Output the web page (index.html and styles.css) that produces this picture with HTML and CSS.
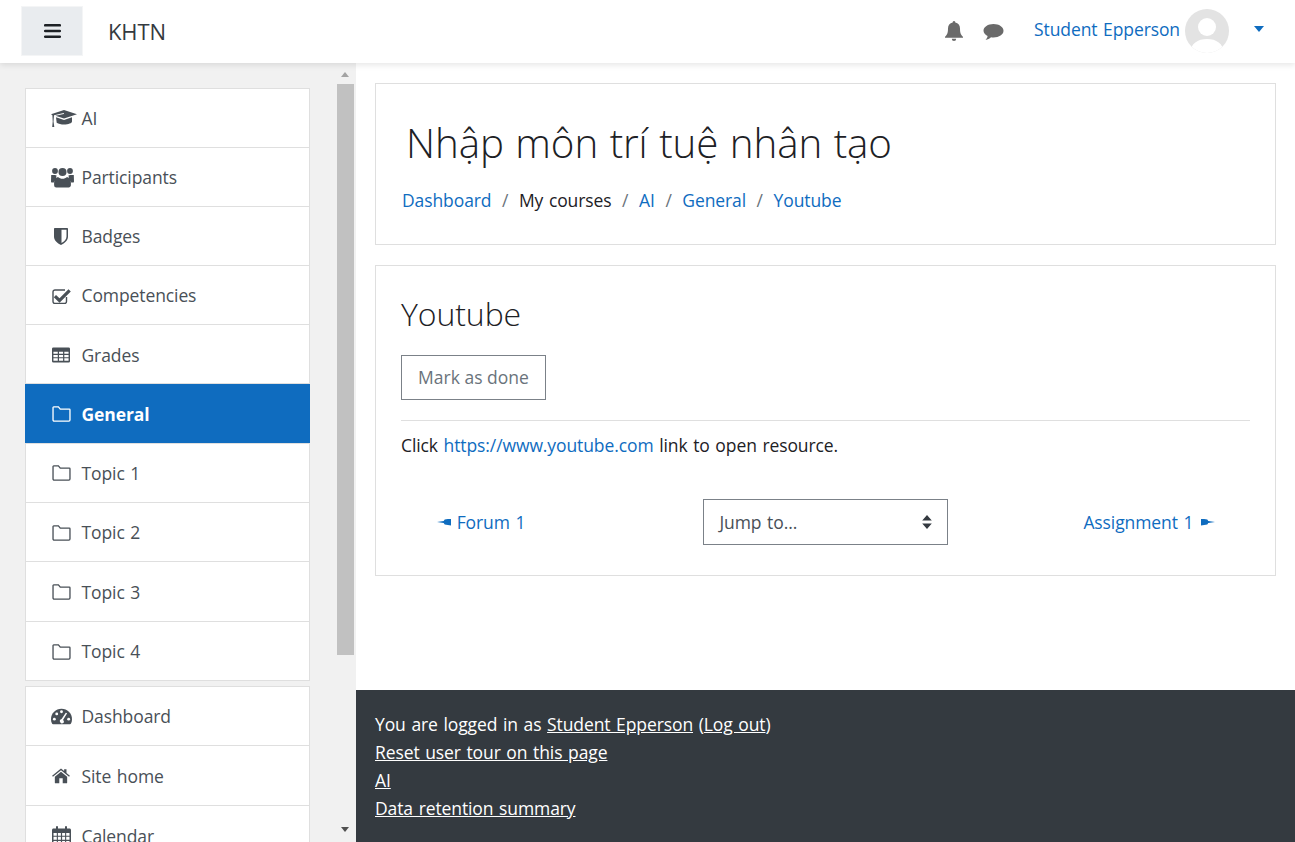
FILE: index.html
```html
<!DOCTYPE html>
<html lang="en">
<head>
<meta charset="utf-8">
<title>Youtube</title>
<link rel="stylesheet" href="styles.css">
</head>
<body>
<svg class="defs" width="0" height="0" aria-hidden="true">
  <symbol id="i-folder" viewBox="0 0 20 17"><path d="M1.700 1h5l2 2.400h9.600c.4 0 .7.300.7.700v10.700c0 .7-.5 1.200-1.200 1.200H2.200c-.7 0-1.200-.5-1.200-1.200V1.700c0-.4.300-.7.700-.7z" fill="none" stroke="currentColor" stroke-width="1.400"/></symbol>
</svg>
<header class="topbar">
  <button class="menu-btn" type="button" aria-label="Menu">
    <svg width="17" height="14" viewBox="0 0 17 14"><path d="M1.200 0h14.600a1.200 1.200 0 0 1 0 2.600H1.200a1.200 1.200 0 0 1 0-2.600zm0 5.700h14.600a1.200 1.200 0 0 1 0 2.600H1.200a1.200 1.200 0 0 1 0-2.600zm0 5.700h14.600a1.200 1.200 0 0 1 0 2.600H1.200a1.200 1.200 0 0 1 0-2.600z" fill="#1d2125"/></svg>
  </button>
  <span class="brand">KHTN</span>
  <div class="top-right">
    <svg class="bell" width="20" height="22" viewBox="0 0 20 22"><path d="M10 1a1.300 1.300 0 0 1 1.300 1.500C14.300 3 16 5.500 16 8.500c0 5 1.300 6.700 3 8.300v1H1v-1c1.700-1.600 3-3.300 3-8.300 0-3 1.700-5.500 4.700-6A1.300 1.300 0 0 1 10 1zM7.800 18.800h4.400a2.200 2.200 0 0 1-4.400 0z" fill="#6a6a6a"/></svg>
    <svg class="chat" width="21" height="18" viewBox="0 0 21 18"><path d="M10.500 1c5.500 0 10 2.900 10 6.700s-4.500 6.700-10 6.700c-.9 0-1.700-.1-2.500-.2C6.600 15.500 4.800 16.500 2.500 17c.9-1 1.900-2.200 2.100-4C2.300 11.800.5 9.900.5 7.700.5 3.900 5 1 10.500 1z" fill="#6a6a6a"/></svg>
    <a class="user-name" href="#">Student Epperson</a>
    <svg class="avatar" width="44" height="44" viewBox="0 0 44 44"><defs><clipPath id="av"><circle cx="22" cy="22" r="22"/></clipPath></defs><circle cx="22" cy="22" r="22" fill="#e3e3e3"/><g clip-path="url(#av)" fill="#fff"><circle cx="22" cy="18" r="9"/><path d="M5 46c0-11 7-16 17-16s17 5 17 16z"/></g></svg>
    <span class="caret"></span>
  </div>
</header>
<div class="layout">
  <aside class="sidebar">
    <nav class="nav-list">
      <a class="nav-item" href="#"><span class="ico"><svg width="26" height="19" viewBox="0 0 26 19"><path d="M13 1 26 5.300l-13 4.300L4.500 6.800 12.800 5l.2-.6-.3-.3-9.700 2.100L2.500 12.500l.8 5.500H1.200l.5-5.500-.3-6.200L0 5.300zM5 8.200l8 2.700 8-2.700v4.300c0 1.600-3.600 3-8 3-2.800 0-5.500-.7-7.300-1.800z" fill="#495057"/></svg></span>AI</a>
      <a class="nav-item" href="#"><span class="ico"><svg width="23" height="21" viewBox="0 0 23 21"><g fill="#495057"><circle cx="4" cy="4" r="2.900"/><circle cx="19" cy="4" r="2.900"/><circle cx="11.500" cy="5" r="4"/><path d="M.2 8h3.600c.7 0 1.300.2 1.800.5-.6 1.300-.4 3.200.2 4.300-1.300.3-2.500 1.300-3 2.700H.9C.3 15.500 0 15 0 14.500zM19.200 8h3.600L23 14.500c0 .5-.3 1-.9 1h-1.900c-.5-1.400-1.700-2.400-3-2.700.6-1.100.8-3 .2-4.300.5-.3 1.100-.5 1.800-.5z"/><path d="M7 10c1.200 1.200 2.800 1.800 4.500 1.800S14.800 11.200 16 10c2.300.6 3.900 2.700 3.900 5.500v2.800c0 1.200-1 2.200-2.200 2.200H5.300a2.200 2.200 0 0 1-2.200-2.200v-2.800C3.100 12.700 4.700 10.600 7 10z"/></g></svg></span>Participants</a>
      <a class="nav-item" href="#"><span class="ico ico-3"><svg width="14" height="17" viewBox="0 0 14 17"><path d="M1 0h12c.6 0 1 .4 1 1v7.500c0 4-3.300 6.800-7 8.500-3.700-1.700-7-4.500-7-8.500V1c0-.6.400-1 1-1zm6.500 1.700v13.400c2.900-1.500 5-3.700 5-6.600V1.700z" fill="#495057" fill-rule="evenodd"/></svg></span>Badges</a>
      <a class="nav-item" href="#"><span class="ico ico-1"><svg width="19" height="16" viewBox="0 0 19 16"><path d="M13 2H3a2 2 0 0 0-2 2v9.500a2 2 0 0 0 2 2h9.500a2 2 0 0 0 2-2V9" fill="none" stroke="#495057" stroke-width="1.400"/><path d="M4 7 7.500 10.300 16.500 1.300 18.800 3.600 7.500 14.800 1.800 9.200z" fill="#495057"/></svg></span>Competencies</a>
      <a class="nav-item" href="#"><span class="ico ico-1"><svg width="18" height="16" viewBox="0 0 19 16"><path d="M1.500 0h16A1.500 1.500 0 0 1 19 1.500v13a1.500 1.500 0 0 1-1.500 1.500h-16A1.500 1.500 0 0 1 0 14.500v-13A1.500 1.500 0 0 1 1.500 0zM1.500 4.500v2.300h4.600V4.500zm5.900 0v2.300h4.300V4.500zm5.600 0v2.300h4.500V4.500zM1.500 8v2.300h4.600V8zm5.900 0v2.300h4.300V8zm5.600 0v2.300h4.500V8zM1.500 11.500v2.700h4.600v-2.700zm5.900 0v2.700h4.300v-2.700zm5.600 0v2.700h4.500v-2.700z" fill="#495057" fill-rule="evenodd"/></svg></span>Grades</a>
      <a class="nav-item is-active" href="#"><span class="ico ico-1"><svg width="19" height="16"><use href="#i-folder"/></svg></span>General</a>
      <a class="nav-item" href="#"><span class="ico ico-1"><svg width="19" height="16"><use href="#i-folder"/></svg></span>Topic 1</a>
      <a class="nav-item" href="#"><span class="ico ico-1"><svg width="19" height="16"><use href="#i-folder"/></svg></span>Topic 2</a>
      <a class="nav-item" href="#"><span class="ico ico-1"><svg width="19" height="16"><use href="#i-folder"/></svg></span>Topic 3</a>
      <a class="nav-item" href="#"><span class="ico ico-1"><svg width="19" height="16"><use href="#i-folder"/></svg></span>Topic 4</a>
    </nav>
    <nav class="nav-list nav-list-2">
      <a class="nav-item" href="#"><span class="ico"><svg width="21" height="17" viewBox="0 0 22 17"><path d="M11 .5C5 .5 0 5.300 0 11.300c0 1.800.4 3.400 1.200 4.900.2.300.5.500.9.500h17.800c.4 0 .7-.2.900-.5.800-1.500 1.200-3.100 1.200-4.900C22 5.300 17 .5 11 .5z" fill="#495057"/><g fill="#fff"><circle cx="3.500" cy="11.300" r="1.500"/><circle cx="6" cy="5.800" r="1.500"/><circle cx="11" cy="3.500" r="1.500"/><circle cx="18.500" cy="11.300" r="1.500"/><path d="M15.500 4.500 16.900 5.200 12.600 12.100a2 2 0 1 1-2.900 2.500 2.200 2.200 0 0 1 1.400-3.600z"/></g></svg></span>Dashboard</a>
      <a class="nav-item" href="#"><span class="ico ico-1"><svg width="18" height="16" viewBox="0 0 19 16"><path d="M9.500 3.400 16 8.700V15c0 .4-.3.700-.7.700h-4V10.500H7.700v5.200h-4a.7.700 0 0 1-.7-.7V8.700zM9.500 0l3.300 2.700V.8h2.500v4l3.600 3-.9 1.100-8.500-7-8.500 7-.9-1.100z" fill="#495057"/></svg></span>Site home</a>
      <a class="nav-item" href="#"><span class="ico ico-1"><svg width="19" height="20" viewBox="0 0 19 20"><path d="M1.500 2.500H4V1a1 1 0 0 1 2 0v1.500h7V1a1 1 0 0 1 2 0v1.500h2.500c.8 0 1.500.7 1.500 1.500v14c0 .8-.7 1.500-1.500 1.500h-16C.7 19.500 0 18.800 0 18V4c0-.8.700-1.500 1.500-1.500zM1.500 7v2.700h3.300V7zm4.400 0v2.700h3V7zm4.200 0v2.700h3V7zm4.100 0v2.700h3.300V7zM1.500 10.800v3h3.300v-3zm4.400 0v3h3v-3zm4.200 0v3h3v-3zm4.100 0v3h3.300v-3zM1.500 15v3h3.300v-3zm4.400 0v3h3v-3zm4.200 0v3h3v-3zm4.100 0v3h3.300v-3z" fill="#495057" fill-rule="evenodd"/></svg></span>Calendar</a>
    </nav>
    <div class="scrollbar" aria-hidden="true">
      <span class="sb-up"></span>
      <span class="sb-thumb"></span>
      <span class="sb-down"></span>
    </div>
  </aside>
  <div class="content">
    <main class="main">
      <section class="card head-card">
        <h1 class="page-title">Nhập môn trí tuệ nhân tạo</h1>
        <ol class="crumbs">
          <li><a href="#">Dashboard</a></li>
          <li class="sep">/</li>
          <li>My courses</li>
          <li class="sep">/</li>
          <li><a href="#">AI</a></li>
          <li class="sep">/</li>
          <li><a href="#">General</a></li>
          <li class="sep">/</li>
          <li><a href="#">Youtube</a></li>
        </ol>
      </section>
      <section class="card body-card">
        <h2 class="sub-title">Youtube</h2>
        <button class="mark-btn" type="button">Mark as done</button>
        <hr class="rule">
        <p class="resource">Click <a href="#">https://www.youtube.com</a> link to open resource.</p>
        <div class="pager">
          <a class="pager-link" href="#"><span class="arrow arrow-left">◄</span> Forum 1</a>
          <div class="jump"><span>Jump to...</span>
            <svg width="10" height="14" viewBox="0 0 10 14"><path d="M5 0l4.800 5.500H.2zM5 14 .2 8.500h9.600z" fill="#343a40"/></svg>
          </div>
          <a class="pager-link pager-next" href="#">Assignment 1 <span class="arrow arrow-right">►</span></a>
        </div>
      </section>
    </main>
    <footer class="footer">
      <div>You are logged in as <a href="#">Student Epperson</a> (<a href="#">Log out</a>)</div>
      <div><a href="#">Reset user tour on this page</a></div>
      <div><a href="#">AI</a></div>
      <div><a href="#">Data retention summary</a></div>
    </footer>
  </div>
</div>
</body>
</html>
```
FILE: styles.css
```css
* { box-sizing: border-box; }
html, body { margin: 0; height: 100%; overflow: hidden; }
body {
  font-family: "Open Sans", "Noto Sans", sans-serif;
  font-size: 17.5px;
  line-height: 27px;
  color: #1d2125;
  background: #fff;
  letter-spacing: -0.1px;
  word-spacing: 1.2px;
}
a { color: #0f6cbf; text-decoration: none; }
.defs { position: absolute; }

.topbar {
  position: relative;
  z-index: 2;
  height: 63px;
  display: flex;
  align-items: center;
  background: #fff;
  box-shadow: 0 2px 6px rgba(0,0,0,.1);
  padding-left: 21px;
  padding-right: 29px;
}
.menu-btn {
  width: 62px;
  height: 50px;
  margin-bottom: 1px;
  border: 1px solid #f4f5f6;
  background: #e9ecef;
  display: flex;
  align-items: center;
  justify-content: center;
  padding: 0;
}
.brand { margin-left: 25px; font-size: 22px; color: #343a40; }
.top-right { margin-left: auto; display: flex; align-items: center; }
.bell { margin-top: -1px; }
.chat { margin-left: 19px; margin-top: 1px; }
.user-name { margin-left: 30px; margin-bottom: 4px; }
.avatar { margin-left: 5px; margin-bottom: 2px; }
.caret {
  margin-left: 25px;
  margin-bottom: 5px;
  margin-right: 2px;
  width: 0; height: 0;
  border-left: 5.500px solid transparent;
  border-right: 5.500px solid transparent;
  border-top: 6px solid #0f6cbf;
}

.layout { display: flex; height: 779px; }
.sidebar {
  position: relative;
  flex: 0 0 356px;
  background: #f1f1f1;
  padding: 25px 46px 0 25px;
  overflow: hidden;
}
.nav-list {
  background: #fff;
  border: 1px solid #dfdfdf;
  margin-bottom: 5px;
}
.nav-item {
  display: flex;
  align-items: center;
  height: 59.100px;
  padding-left: 25px;
  padding-top: .8px;
  color: #495057;
  border-bottom: 1px solid #dfdfdf;
}
.nav-item:nth-child(5) { padding-top: 2px; }
.nav-item:nth-child(9) { height: 60px; }
.nav-item:last-child { border-bottom: 0; height: 58px; }
.nav-list-2 .nav-item { height: 59.200px; }
.nav-list-2 .nav-item:nth-child(2) { height: 60px; }
.ico { flex: 0 0 30.500px; display: flex; align-items: center; color: #495057; }
.ico-1 { padding-left: 1px; }
.ico-3 { padding-left: 3px; }
.is-active {
  margin: -.5px -1px 0;
  padding-left: 26px;
  padding-top: 1.600px;
  height: 60px;
  background: #0f6cbf;
  color: #fff;
  font-weight: 700;
}
.is-active .ico { color: #fff; }
.scrollbar {
  position: absolute;
  top: 0; bottom: 0;
  right: 2px;
  width: 17px;
}
.sb-up, .sb-down {
  position: absolute;
  left: 4px;
  width: 0; height: 0;
  border-left: 4.500px solid transparent;
  border-right: 4.500px solid transparent;
}
.sb-up { top: 9px; border-bottom: 5px solid #a3a3a3; }
.sb-down { bottom: 10px; border-top: 5px solid #505050; }
.sb-thumb {
  position: absolute;
  top: 21px;
  left: 0;
  width: 17px;
  height: 571px;
  background: #c1c1c1;
}

.content { flex: 1; display: flex; flex-direction: column; }
.main { flex: 1; padding: 20px 19px 0; }
.card { border: 1px solid #dfdfdf; background: #fff; }
.head-card { height: 162px; padding: 34px 25px 0; margin-bottom: 20px; }
.page-title {
  margin: 0 0 0 5px;
  font-weight: 300;
  font-size: 40.300px;
  line-height: 50px;
  color: #1d2125;
}
.crumbs {
  list-style: none;
  margin: 19px 0 0;
  padding: 0 0 0 1px;
  display: flex;
}
.sep { margin: 0 10.600px; color: #6a737b; }
.body-card { height: 311px; padding: 26px 25px 0; }
.sub-title {
  margin: 0;
  font-weight: 300;
  font-size: 32px;
  line-height: 44px;
}
.mark-btn {
  display: block;
  margin-top: 19px;
  width: 145px;
  height: 45px;
  border: 1px solid #7b8188;
  background: #fff;
  color: #6a737b;
  font: inherit;
  padding: 0;
}
.rule { margin: 20px 0 0; border: 0; border-top: 1px solid #dfdfdf; }
.resource { margin: 11px 0 0; }
.pager {
  margin-top: 40px;
  display: grid;
  grid-template-columns: 1fr 245px 1fr;
  align-items: center;
  padding: 0 36px 0 35px;
}
.pager-link { margin-left: 1px; }
.pager-next { justify-self: end; margin-left: 0; margin-right: -1px; }
.arrow {
  display: inline-block;
  width: 14px;
  height: 7px;
  overflow: hidden;
  font-size: 7px;
  line-height: 7px;
  color: transparent;
  background: #0f6cbf;
  vertical-align: 3px;
}
.arrow-left { clip-path: polygon(0 50%, 48% 36%, 55% 14%, 100% 0, 100% 100%, 55% 86%, 48% 64%); }
.arrow-right { margin-left: 2px; clip-path: polygon(100% 50%, 52% 36%, 45% 14%, 0 0, 0 100%, 45% 86%, 52% 64%); }
.jump {
  height: 46px;
  border: 1px solid #7b8188;
  display: flex;
  align-items: center;
  justify-content: space-between;
  padding: 0 15px 0 16px;
  color: #495057;
}
.footer {
  height: 152px;
  background: #343a40;
  color: #fff;
  padding: 20px 19px 0;
  line-height: 28px;
}
.footer a { color: #fff; text-decoration: underline; }
```
